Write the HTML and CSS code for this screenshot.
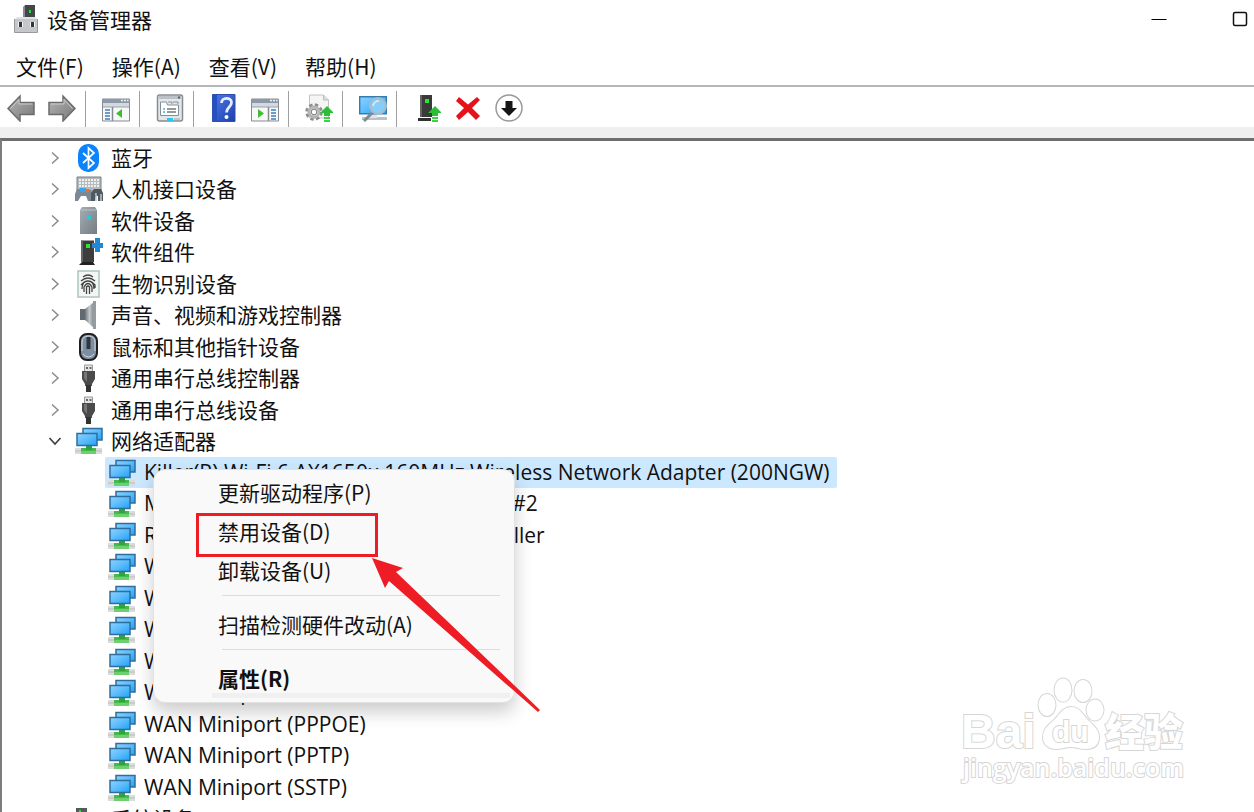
FILE: index.html
```html
<!DOCTYPE html>
<html lang="zh-CN">
<head>
<meta charset="utf-8">
<title>设备管理器</title>
<link rel="stylesheet" href="styles.css">
</head>
<body>
<svg class="defs" aria-hidden="true">
  <defs>
    <linearGradient id="screen" x1="0" y1="0" x2="1" y2="1"><stop offset="0" stop-color="#8fd2ff"/><stop offset=".5" stop-color="#5bbcfb"/><stop offset="1" stop-color="#1fa0f8"/></linearGradient>
    <linearGradient id="steel" x1="0" y1="0" x2="1" y2="1"><stop offset="0" stop-color="#a5adb4"/><stop offset="1" stop-color="#757d84"/></linearGradient>
    <linearGradient id="arrowfill" x1="0" y1="0" x2="1" y2="1"><stop offset="0" stop-color="#b5b5b5"/><stop offset="1" stop-color="#777"/></linearGradient>
    <linearGradient id="book" x1="0" y1="0" x2="1" y2="1"><stop offset="0" stop-color="#5079e6"/><stop offset="1" stop-color="#1c40ad"/></linearGradient>
    <linearGradient id="cone" x1="0" y1="0" x2="1" y2="0"><stop offset="0" stop-color="#6d7378"/><stop offset=".5" stop-color="#c3c8cc"/><stop offset="1" stop-color="#7d8387"/></linearGradient>
    <symbol id="net" viewBox="0 0 28 28">
      <path d="M0 21h27v6H0z" fill="#dcdcdc"/><path d="M0 23.500h27v1H0z" fill="#bcbcbc"/>
      <path d="M11 18h6v3h4v6H6v-6h5z" fill="#45b94c"/><path d="M6 24h15v3H6z" fill="#6cd06e"/><path d="M11 19h6v4h-6z" fill="#2fa43a"/>
      <path d="M8 1.500h19v11.500H8z" fill="url(#screen)" stroke="#2f6d9b" stroke-width="1.500"/>
      <path d="M2 6.500h20v12H2z" fill="url(#screen)" stroke="#2f6d9b" stroke-width="1.500"/>
    </symbol>
    <symbol id="usb" viewBox="0 0 28 28">
      <path d="M9.500 1h8v7h-8z" fill="#e4e4e4" stroke="#999"/><path d="M11 3h2v2h-2zM14.500 3h2v2h-2z" fill="#666"/>
      <path d="M7 7h13v8l-3 5v2H10v-2l-3-5z" fill="#4b4b4b"/><path d="M9 8h3v10l-3-4z" fill="#777"/><path d="M11 21h5v7h-5z" fill="#333"/>
    </symbol>
    <symbol id="server" viewBox="0 0 28 28">
      <path d="M6 2.500h13V24H6z" fill="#3d3d3d"/><path d="M6 2.500h2V24H6z" fill="#666"/><path d="M7 24h11l2 3H4z" fill="#222"/><path d="M11 6h4v4h-4z" fill="#2ee43c"/>
    </symbol>
    <symbol id="uparrow" viewBox="0 0 14 16"><path d="M7 0l7 7h-4v3H4V7H0z" fill="#2abf34"/><path d="M4 11h6v2H4zM4 14h6v2H4z" fill="#39d544"/></symbol>
    <symbol id="panel" viewBox="0 0 28 28">
      <path d="M.5 5h27v22H.5z" fill="#f8f8f8" stroke="#858b93"/><path d="M.5 5h27v4H.5z" fill="#8d98a8"/><path d="M19 6.500h2M22 6.500h2M25 6.500h1.500" stroke="#edf1f6" stroke-width="1.500"/>
      <path d="M1 9h26v4H1z" fill="#d4d9df"/><path d="M1 13h26" stroke="#9aa1aa"/>
    </symbol>
    <symbol id="chev" viewBox="0 0 14 14"><path d="M4 1.500l6 5.500-6 5.500" fill="none" stroke="#8b8b8b" stroke-width="1.500"/></symbol>
    <symbol id="chevdown" viewBox="0 0 14 14"><path d="M1.500 4L7 10l5.500-6" fill="none" stroke="#404040" stroke-width="1.700"/></symbol>
  </defs>
</svg>

<header class="titlebar">
  <svg class="app-icon" viewBox="0 0 24 28"><path d="M11 0h10v15H11z" fill="#424747"/><path d="M11 0l-2 2v13h2z" fill="#858b8e"/><path d="M15 5h2v3h-2z" fill="#2cda45"/><path d="M1 14h22v13H1z" fill="#c5c7ca"/><path d="M1 14h22l-2-2H3z" fill="#e0e1e3"/><path d="M.5 14v13.500h23V14" fill="none" stroke="#96999e"/><path d="M4 17h5v5H4zM16 17h5v5h-5z" fill="#f5f5f5"/><path d="M5 17h3v5H5zM17 17h3v5h-3z" fill="#30353a"/></svg>
  <h1 class="title">设备管理器</h1>
  <div class="window-controls">
    <button class="win-btn" aria-label="最小化"><svg viewBox="0 0 16 16"><path d="M.5 8.500h15" stroke="#000"/></svg></button>
    <button class="win-btn" aria-label="最大化"><svg viewBox="0 0 16 16"><rect x="1.500" y="1.500" width="13" height="13" rx="1.500" fill="none" stroke="#111" stroke-width="1.500"/></svg></button>
  </div>
</header>
<nav class="menubar">
  <button>文件(F)</button><button>操作(A)</button><button>查看(V)</button><button>帮助(H)</button>
</nav>
<div class="toolbar">
  <div class="tool-group first">
    <button aria-label="后退"><svg viewBox="0 0 28 28"><path d="M1 14.500L13 2v6.500h14v12H13V27z" fill="url(#arrowfill)" stroke="#6b6b6b" stroke-width="1.500"/><path d="M3.500 14.500L12 5.500V10h13.500" fill="none" stroke="#ccc"/></svg></button>
    <button aria-label="前进"><svg viewBox="0 0 28 28"><path d="M27 14.500L15 2v6.500H1v12h14V27z" fill="url(#arrowfill)" stroke="#6b6b6b" stroke-width="1.500"/><path d="M24.500 14.500L16 5.500V10H2.500" fill="none" stroke="#ccc"/></svg></button>
  </div>
  <div class="tool-group">
    <button aria-label="显示/隐藏控制台树"><svg viewBox="0 0 28 28"><use href="#panel"/><path d="M10.500 13v14" stroke="#858b93" stroke-width="1.500"/><path d="M3 16h5M3 19h5M3 22h5M3 25h5" stroke="#397fc2" stroke-width="1.500"/><path d="M20 15v9l-6-4.500z" fill="#3fbd2f"/></svg></button>
  </div>
  <div class="tool-group">
    <button aria-label="属性"><svg viewBox="0 0 28 28"><rect x="1.500" y="1" width="25" height="26" rx="2" fill="#e4e7e9" stroke="#868c91" stroke-width="1.500"/><path d="M3 2h22v3H3z" fill="#bbc1c6"/><path d="M22 2.500h2v2h-2z" fill="#555f68"/><path d="M4.500 8h6l1 3h11v10.500h-18z" fill="#fff" stroke="#858f98"/><path d="M12 8h4v2M17 8h5v2" fill="none" stroke="#858f98"/><path d="M7 15h2M7 18h2" stroke="#28bddc" stroke-width="1.500"/><path d="M11 15h9M11 18h9" stroke="#777" stroke-width="1.300"/><path d="M11 24h6v3h-6z" fill="#27c8ef"/><path d="M18 24h6v2h-6z" fill="#bcc5ca"/></svg></button>
  </div>
  <div class="tool-group">
    <button aria-label="帮助"><svg viewBox="0 0 28 28"><path d="M2.500.5h22.500v27H2.500z" fill="url(#book)" stroke="#2d4fae"/><path d="M3 1h4v26H3z" fill="#2450c3"/><path d="M11.500 9c0-6 10-6 10-.5 0 4.500-5 4.500-5 10" fill="none" stroke="#e8edfb" stroke-width="2.800"/><circle cx="16.500" cy="23" r="2" fill="#fff"/></svg></button>
    <button aria-label="显示/隐藏操作窗格"><svg viewBox="0 0 28 28"><use href="#panel"/><path d="M17.500 13v14" stroke="#858b93" stroke-width="1.500"/><path d="M20 16h5M20 19h5M20 22h5M20 25h5" stroke="#397fc2" stroke-width="1.500"/><path d="M7 15v9l6-4.500z" fill="#3fbd2f"/></svg></button>
  </div>
  <div class="tool-group">
    <button aria-label="更新驱动程序"><svg viewBox="0 0 28 28"><path d="M4.500 1h14l5 5v18h-19z" fill="#f5f5f5" stroke="#c2c2c2"/><path d="M18.500 1v5h5" fill="#ddd" stroke="#bbb"/><circle cx="9" cy="18" r="6.500" fill="none" stroke="#8d8d8d" stroke-width="4.500" stroke-dasharray="3 2.100"/><circle cx="9" cy="18" r="5" fill="#f2f2f2" stroke="#b5b5b5" stroke-width="3"/><circle cx="9" cy="18" r="2.800" fill="#fff" stroke="#777"/><use href="#uparrow" x="15" y="12" width="14" height="16"/></svg></button>
  </div>
  <div class="tool-group">
    <button aria-label="扫描检测硬件改动"><svg viewBox="0 0 28 28"><path d="M3 23h25v3H3z" fill="#b7c3cc"/><path d="M10 20h8v4h-8z" fill="#dde3e8"/><path d="M.7 2.700h26.600v17H.7z" fill="url(#screen)" stroke="#347eaf" stroke-width="1.400"/><path d="M13 19l-8 8" stroke="#7e8990" stroke-width="3"/><circle cx="19" cy="12" r="8" fill="#87cdf6" stroke="#a9bac6" stroke-width="2"/><path d="M14 12q1-5 6-5" fill="none" stroke="#d6f1ff" stroke-width="1.500"/></svg></button>
  </div>
  <div class="tool-group last">
    <button aria-label="启用设备"><svg viewBox="0 0 28 28"><path d="M7 1h12v22H7z" fill="#3a3a3a"/><path d="M7 1h2v22H7z" fill="#646464"/><path d="M5 24h13v3H5z" fill="#303030"/><path d="M12 5h4v4h-4z" fill="#28e538"/><use href="#uparrow" x="15" y="12" width="14" height="16"/></svg></button>
    <button aria-label="卸载设备"><svg viewBox="0 0 28 28"><path d="M5 3l9 7.500L23 3l3 3-8 8 8 8-4 4-8-8-9 8-3-4 8-8-8-7z" fill="#e4131b"/></svg></button>
    <button aria-label="禁用设备"><svg viewBox="0 0 28 28"><circle cx="14" cy="14" r="13" fill="#fff" stroke="#999" stroke-width="1.500"/><path d="M10.500 7h7v7H22l-8 8-8-8h4.500z" fill="#151515"/></svg></button>
  </div>
</div>

<main class="content">
  <ul class="tree">
    <li class="node"><button class="expander" aria-label="展开"><svg><use href="#chev"/></svg></button><svg class="icon" viewBox="0 0 28 28"><rect x="3" width="21" height="28" rx="10" fill="#0a83fb"/><path d="M8 9l11 10-5.500 5V4L19 9 8 19" fill="none" stroke="#fff" stroke-width="1.700"/></svg><span>蓝牙</span></li>
    <li class="node"><button class="expander" aria-label="展开"><svg><use href="#chev"/></svg></button><svg class="icon" viewBox="0 0 28 28"><path d="M2 2h24v14H2z" fill="#b5babd" stroke="#777f85"/><path d="M4 5h20M4 8h20M4 11h20" stroke="#fff" stroke-width="1.500" stroke-dasharray="2 1"/><path d="M2 14h12l3 3-1 9h-3l-2-5H6l-3 5H0v-7z" fill="#7c8994"/><path d="M5 13h6v4H5z" fill="#36a5ed"/><path d="M11 14h3v3h-3z" fill="#f36c34"/><path d="M19 14h7l2 4v8h-5v-5h-3v5h-4v-8z" fill="#4e5960"/><path d="M20 19h1v7M26 19v7" stroke="#c1c9cf" stroke-width="1.500"/></svg><span>人机接口设备</span></li>
    <li class="node"><button class="expander" aria-label="展开"><svg><use href="#chev"/></svg></button><svg class="icon" viewBox="0 0 28 28"><path d="M5 3l2-3h13l2 3v24H5z" fill="url(#steel)"/><path d="M5 3h17" stroke="#b9c0c5"/><path d="M12 9h4v4h-4z" fill="#21ccdf"/></svg><span>软件设备</span></li>
    <li class="node"><button class="expander" aria-label="展开"><svg><use href="#chev"/></svg></button><svg class="icon" viewBox="0 0 28 28"><use href="#server"/><path d="M20 0h5v5h3v5h-3v4h-5v-4h-3V5h3z" fill="#2189d2"/></svg><span>软件组件</span></li>
    <li class="node"><button class="expander" aria-label="展开"><svg><use href="#chev"/></svg></button><svg class="icon" viewBox="0 0 28 28"><path d="M3 1h21v26H3z" fill="#f4f6f5" stroke="#a9c6bd" stroke-width="1.500"/><g fill="none" stroke="#444" stroke-width="1.300"><path d="M8 7q5-4 10 0M6 11q7-6 14 0M6 15q7-8 14 0v3M7 19q0-8 6-8t6 8M9 22v-5q4-7 8 0v5M11.500 24v-7q1.500-2 3 0v7"/></g></svg><span>生物识别设备</span></li>
    <li class="node"><button class="expander" aria-label="展开"><svg><use href="#chev"/></svg></button><svg class="icon" viewBox="0 0 28 28"><path d="M5 8h6v11H5z" fill="#626a70"/><path d="M10 8l9-7v26l-9-8z" fill="url(#cone)"/><path d="M18 0h3v28h-3z" fill="#959b9f"/></svg><span>声音、视频和游戏控制器</span></li>
    <li class="node"><button class="expander" aria-label="展开"><svg><use href="#chev"/></svg></button><svg class="icon" viewBox="0 0 28 28"><rect x="5" y="1" width="17" height="26" rx="7" fill="#7e8ea1" stroke="#1d1f22" stroke-width="2"/><path d="M7 18v-9q0-6 6.500-6T20 9v9" fill="none" stroke="#d1d9e1"/><rect x="11.500" y="4" width="4" height="12" fill="#30363d"/><path d="M8 21q5.500 6 11 0" fill="none" stroke="#d1d9e1"/></svg><span>鼠标和其他指针设备</span></li>
    <li class="node"><button class="expander" aria-label="展开"><svg><use href="#chev"/></svg></button><svg class="icon"><use href="#usb"/></svg><span>通用串行总线控制器</span></li>
    <li class="node"><button class="expander" aria-label="展开"><svg><use href="#chev"/></svg></button><svg class="icon"><use href="#usb"/></svg><span>通用串行总线设备</span></li>
    <li class="node"><button class="expander" aria-label="折叠"><svg><use href="#chevdown"/></svg></button><svg class="icon"><use href="#net"/></svg><span>网络适配器</span></li>
    <li class="node child"><div class="device selected"><svg class="icon"><use href="#net"/></svg><span>Killer(R) Wi-Fi 6 AX1650x 160MHz Wireless Network Adapter (200NGW)</span></div></li>
    <li class="node child"><div class="device"><svg class="icon"><use href="#net"/></svg><span>Microsoft Wi-Fi Direct Virtual Adapter #2</span></div></li>
    <li class="node child"><div class="device"><svg class="icon"><use href="#net"/></svg><span>Realtek Gaming 2.5GbE Family Controller</span></div></li>
    <li class="node child"><div class="device"><svg class="icon"><use href="#net"/></svg><span>WAN Miniport (IKEv2)</span></div></li>
    <li class="node child"><div class="device"><svg class="icon"><use href="#net"/></svg><span>WAN Miniport (IP)</span></div></li>
    <li class="node child"><div class="device"><svg class="icon"><use href="#net"/></svg><span>WAN Miniport (IPv6)</span></div></li>
    <li class="node child"><div class="device"><svg class="icon"><use href="#net"/></svg><span>WAN Miniport (L2TP)</span></div></li>
    <li class="node child"><div class="device"><svg class="icon"><use href="#net"/></svg><span>WAN Miniport (Network Monitor)</span></div></li>
    <li class="node child"><div class="device"><svg class="icon"><use href="#net"/></svg><span>WAN Miniport (PPPOE)</span></div></li>
    <li class="node child"><div class="device"><svg class="icon"><use href="#net"/></svg><span>WAN Miniport (PPTP)</span></div></li>
    <li class="node child"><div class="device"><svg class="icon"><use href="#net"/></svg><span>WAN Miniport (SSTP)</span></div></li>
    <li class="node"><button class="expander" aria-label="展开"><svg><use href="#chev"/></svg></button><svg class="icon" viewBox="0 0 28 28"><path d="M1 3h11v12H1z" fill="#555b5d"/><path d="M4 5h2v2H4z" fill="#2be03c"/></svg><span>系统设备</span></li>
  </ul>

  <div class="context-menu" role="menu">
    <button role="menuitem">更新驱动程序(P)</button>
    <button role="menuitem">禁用设备(D)</button>
    <button role="menuitem">卸载设备(U)</button>
    <hr>
    <button role="menuitem">扫描检测硬件改动(A)</button>
    <hr>
    <button role="menuitem" class="default">属性(R)</button>
    <div class="highlight"></div>
    <svg class="pointer" viewBox="0 0 168 154"><path d="M0 0l31 10-7 4 144 138-2 2L17 23l-4 7z" fill="#ee1c25"/></svg>
  </div>

  <svg class="watermark" viewBox="0 0 228 114" role="img" aria-label="Baidu 经验">
    <g class="mark">
      <ellipse cx="87" cy="30" rx="8.500" ry="11"/><ellipse cx="103" cy="15" rx="8.500" ry="11.500"/><ellipse cx="123" cy="16" rx="8.500" ry="11"/><ellipse cx="135" cy="35" rx="8.500" ry="10.500"/>
      <path d="M111 32c-9 0-12 9-18 14-6 5-10 9-10 16 0 8 6 12 13 12 6 0 10-2 15-2s9 2 15 2c8 0 13-4 13-12 0-7-5-11-10-16-6-6-9-14-18-14z"/>
      <text class="latin" x="1" y="73" font-size="48">Bai</text>
      <text class="latin" x="92" y="67" font-size="30">du</text>
      <text class="hanzi" x="145" y="71" font-size="39">经验</text>
      <text class="url" x="3" y="102" font-size="25">jingyan.baidu.com</text>
    </g>
  </svg>
</main>
</body>
</html>
```
FILE: styles.css
```css
* { box-sizing: border-box; }

body {
  margin: 0;
  height: 100vh;
  overflow: hidden;
  display: flex;
  flex-direction: column;
  background: #fff;
  color: #111;
  font: 21px/30px "Noto Sans CJK SC", sans-serif;
}

button {
  margin: 0;
  padding: 0;
  border: 0;
  background: none;
  color: inherit;
  font: inherit;
}

svg { display: block; flex: none; }
.defs { position: absolute; width: 0; height: 0; }

.titlebar {
  flex: none;
  display: flex;
  align-items: center;
  height: 38px;
  padding-left: 14px;
  gap: 9px;
}
.app-icon { width: 24px; height: 28px; }
.title { margin: 0; font-size: 21px; font-weight: 400; }
.window-controls { margin-left: auto; margin-right: 6px; display: flex; gap: 65px; }
.win-btn svg { width: 16px; height: 16px; }

.menubar {
  flex: none;
  display: flex;
  gap: 28px;
  height: 49px;
  padding: 13px 16px 0;
  border-bottom: 2px solid #b5b8bb;
}
.menubar button { height: 30px; }

.toolbar {
  flex: none;
  display: flex;
  height: 51px;
  padding: 4px 0 11px;
  background: linear-gradient(#fff 40px, #efefef 40px);
}
.tool-group {
  display: flex;
  align-items: center;
  gap: 13px;
  padding: 0 9px 2px 16px;
  border-right: 1px solid #a0a0a0;
}
.tool-group.first { padding-left: 7px; }
.tool-group.last { border-right: 0; }
.tool-group svg { width: 28px; height: 28px; }

.content {
  flex: 1;
  min-height: 0;
  border-top: 3px solid #6e6e6e;
  border-left: 2px solid #7d7d7d;
}
.tree { margin: 0; padding: 1px 0 0; list-style: none; }
.node {
  display: flex;
  align-items: center;
  height: 31px;
  padding-left: 46px;
  white-space: nowrap;
}
.node:nth-child(even) { height: 32px; }
.node span { padding-bottom: 2px; }
.expander { width: 14px; height: 14px; margin-right: 13px; }
.expander svg { width: 14px; height: 14px; }
.icon { width: 28px; height: 28px; margin-right: 8px; }
.node.child { padding-left: 103px; }
.device {
  display: flex;
  align-items: center;
  height: 100%;
  padding: 0 7px 0 3px;
  font-family: "Open Sans", "Noto Sans", sans-serif;
  font-size: 21px;
}
.device.selected { background: #cce8ff; border-radius: 2px; }

.context-menu {
  position: absolute;
  left: 153px;
  top: 469px;
  width: 362px;
  padding: 4px 14px 3px 64px;
  background: #f9f9f9;
  border: 1px solid #e2e2e2;
  border-radius: 12px;
  box-shadow: 0 9px 18px rgba(0, 0, 0, .2);
}
.context-menu button {
  display: block;
  width: 100%;
  height: 39px;
  padding-bottom: 4px;
  text-align: left;
  white-space: nowrap;
}
.context-menu hr {
  height: 1px;
  margin: 4px 0 10px 4px;
  border: 0;
  background: #dcdcdc;
}
.context-menu .default { font-weight: 700; }
.context-menu::after {
  content: "";
  position: absolute;
  left: 58px;
  right: 4px;
  bottom: 4px;
  height: 5px;
  background: #f0f0f0;
}
.highlight {
  position: absolute;
  left: 42px;
  top: 43px;
  width: 182px;
  height: 44px;
  border: 3px solid #ee1c25;
}
.pointer {
  position: absolute;
  z-index: 1;
  left: 218px;
  top: 88px;
  width: 168px;
  height: 154px;
}

.watermark {
  position: absolute;
  right: 66px;
  bottom: 23px;
  width: 228px;
  height: 114px;
}
.mark {
  fill: #fff;
  stroke: #d6d6d6;
  stroke-width: 2px;
  paint-order: stroke;
}
.latin { font-family: "Liberation Sans", sans-serif; font-weight: 700; }
.hanzi { font-family: "Noto Sans CJK SC", sans-serif; font-weight: 900; }
.url { font-family: "Open Sans", sans-serif; font-weight: 600; }
```
